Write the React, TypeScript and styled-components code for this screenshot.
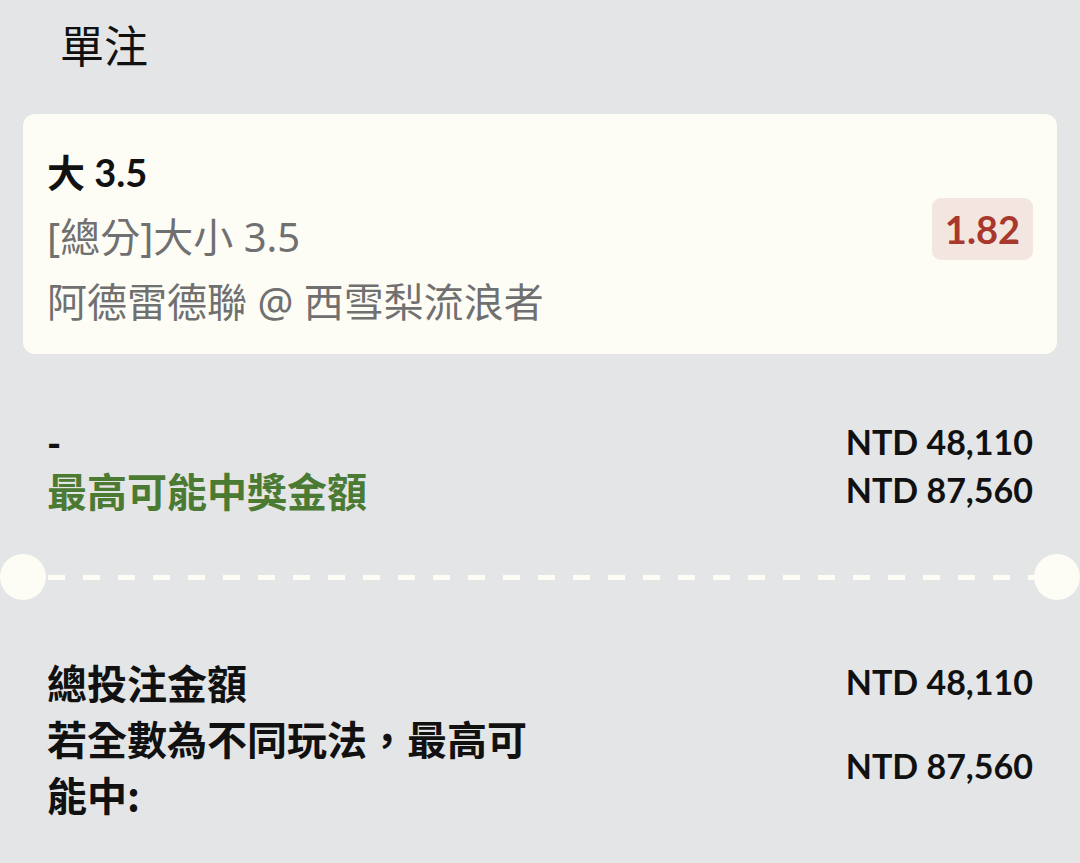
import React from "react";
import styled, { createGlobalStyle } from "styled-components";

const Global = createGlobalStyle`
  html, body { margin: 0; padding: 0; background: #e4e5e7; }
  body { font-family: Lato, "Noto Sans CJK TC", sans-serif; color: #111; }
`;

const Page = styled.div`
  width: 1080px;
  min-height: 863px;
  box-sizing: border-box;
  padding: 0 23px;
  overflow: hidden;
`;

const Title = styled.h1`
  margin: 0;
  padding: 18px 0 0 37px;
  height: 114px;
  box-sizing: border-box;
  font-family: "Noto Sans CJK TC", sans-serif;
  font-weight: 400;
  font-size: 44px;
  line-height: 52px;
  color: #111;
`;

const Card = styled.div`
  background: #fdfdf6;
  border-radius: 12px;
  padding: 26px 24px 20px;
  display: flex;
  align-items: center;
  justify-content: space-between;
`;

const CardInfo = styled.div`
  display: flex;
  flex-direction: column;
`;

const Selection = styled.div`
  font-family: Lato, "Noto Sans CJK TC", sans-serif;
  font-weight: 700;
  font-size: 38px;
  line-height: 64px;
  height: 64px;
  color: #111;
`;

const Meta = styled.div`
  font-family: "Noto Sans", "Noto Sans CJK TC", sans-serif;
  font-weight: 400;
  font-size: 40px;
  line-height: 65px;
  color: #707070;
  white-space: nowrap;
`;

const Odds = styled.div`
  background: #f3e5e0;
  color: #a8382b;
  border-radius: 9px;
  font-family: Lato, sans-serif;
  font-weight: 700;
  font-size: 38px;
  line-height: 62px;
  padding: 0 13px;
  margin-bottom: 16px;
`;

const Summary = styled.div<{ $top: number }>`
  padding: 0 24px;
  margin-top: ${(p) => p.$top}px;
  display: flex;
  flex-direction: column;
`;

const Row = styled.div<{ $lh: number }>`
  display: flex;
  align-items: center;
  justify-content: space-between;
  height: ${(p) => p.$lh}px;
  line-height: ${(p) => p.$lh}px;
`;

const WrapRow = styled(Row)`
  height: auto;
`;

const Label = styled.div<{ $color?: string }>`
  font-family: "Noto Sans CJK TC", sans-serif;
  font-weight: 700;
  font-size: 40px;
  color: ${(p) => p.$color || "#111"};
  max-width: 500px;
`;

const Dash = styled.div`
  font-family: Lato, sans-serif;
  font-weight: 900;
  font-size: 38px;
  color: #111;
`;

const Amount = styled.div`
  font-family: Lato, sans-serif;
  font-weight: 700;
  font-size: 34px;
  color: #111;
  white-space: nowrap;
`;

const Divider = styled.div`
  display: flex;
  align-items: center;
  margin: 40px -23px 0;
  height: 46px;
`;

const Notch = styled.div`
  width: 46px;
  height: 46px;
  border-radius: 50%;
  background: #fdfdf6;
  flex: none;
`;

const Dashes = styled.div`
  flex: 1;
  height: 5px;
  margin: 0 0 0 2px;
  background: repeating-linear-gradient(
    to right,
    #fdfdf6 0 17px,
    transparent 17px 35px
  );
`;

export default function App() {
  return (
    <>
      <Global />
      <Page>
        <Title>單注</Title>
        <Card>
          <CardInfo>
            <Selection>大 3.5</Selection>
            <Meta>[總分]大小 3.5</Meta>
            <Meta>阿德雷德聯 @ 西雪梨流浪者</Meta>
          </CardInfo>
          <Odds>1.82</Odds>
        </Card>
        <Summary $top={64}>
          <Row $lh={48}>
            <Dash>-</Dash>
            <Amount>NTD 48,110</Amount>
          </Row>
          <Row $lh={48}>
            <Label $color="#4b7a33">最高可能中獎金額</Label>
            <Amount>NTD 87,560</Amount>
          </Row>
        </Summary>
        <Divider>
          <Notch />
          <Dashes />
          <Notch />
        </Divider>
        <Summary $top={54}>
          <Row $lh={56}>
            <Label>總投注金額</Label>
            <Amount>NTD 48,110</Amount>
          </Row>
          <WrapRow $lh={56}>
            <Label>若全數為不同玩法，最高可能中:</Label>
            <Amount>NTD 87,560</Amount>
          </WrapRow>
        </Summary>
      </Page>
    </>
  );
}
